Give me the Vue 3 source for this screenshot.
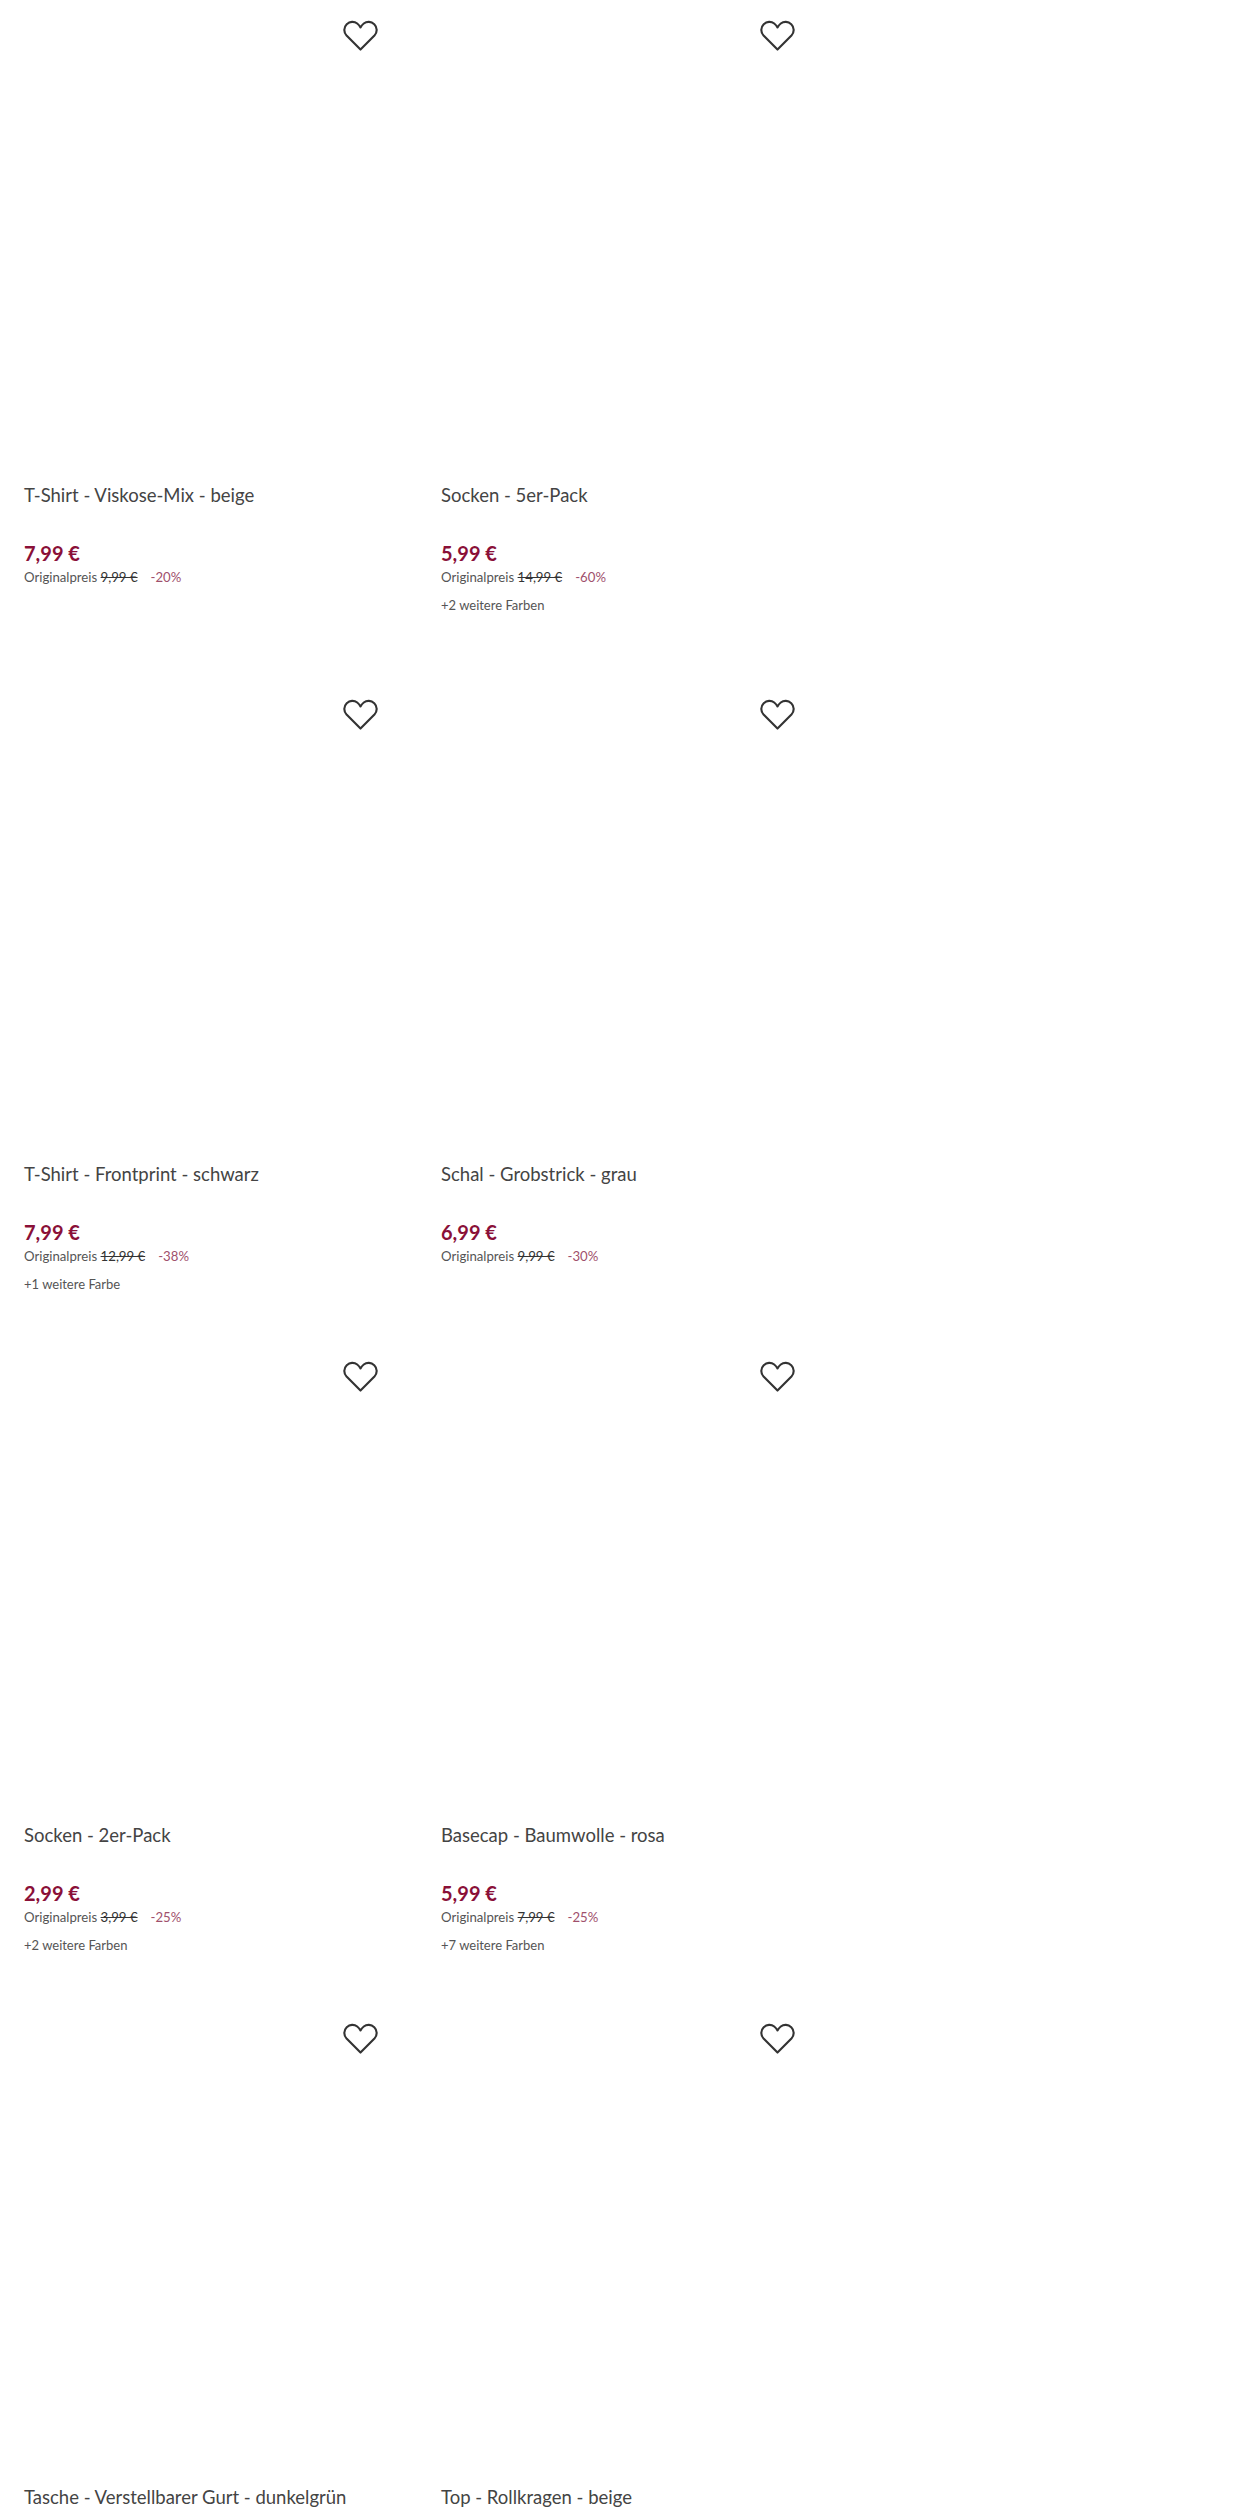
<script setup>
const rows = [
  {
    cls: 'row-first',
    items: [
      { title: 'T-Shirt - Viskose-Mix - beige', price: '7,99 €', old: '9,99 €', off: '-20%' },
      { title: 'Socken - 5er-Pack', price: '5,99 €', old: '14,99 €', off: '-60%', more: '+2 weitere Farben' }
    ]
  },
  {
    cls: '',
    items: [
      { title: 'T-Shirt - Frontprint - schwarz', price: '7,99 €', old: '12,99 €', off: '-38%', more: '+1 weitere Farbe' },
      { title: 'Schal - Grobstrick - grau', price: '6,99 €', old: '9,99 €', off: '-30%' }
    ]
  },
  {
    cls: 'row-tight',
    items: [
      { title: 'Socken - 2er-Pack', price: '2,99 €', old: '3,99 €', off: '-25%', more: '+2 weitere Farben' },
      { title: 'Basecap - Baumwolle - rosa', price: '5,99 €', old: '7,99 €', off: '-25%', more: '+7 weitere Farben' }
    ]
  },
  {
    cls: 'row-tight',
    items: [
      { title: 'Tasche - Verstellbarer Gurt - dunkelgrün' },
      { title: 'Top - Rollkragen - beige' }
    ]
  }
]
</script>

<template>
  <div class="page">
    <div class="row" :class="row.cls" v-for="(row, i) in rows" :key="i">
      <div class="card" v-for="item in row.items" :key="item.title">
        <div class="image">
          <svg class="heart" viewBox="0 0 36 32" width="35" height="31">
            <path d="M18 30.5 L3.6 16 C0.4 12.6 0.6 7.4 3.8 4.3 C7 1.2 11.6 1.2 14.6 3.6 C16 4.7 17.2 6.2 18 7.6 C18.8 6.2 20 4.7 21.4 3.6 C24.4 1.2 29 1.2 32.2 4.3 C35.4 7.4 35.6 12.6 32.4 16 Z" />
          </svg>
        </div>
        <div class="title">{{ item.title }}</div>
        <template v-if="item.price">
          <div class="price">{{ item.price }}</div>
          <div class="original">
            Originalpreis <s>{{ item.old }}</s><span class="off">{{ item.off }}</span>
          </div>
          <div class="more" v-if="item.more">{{ item.more }}</div>
        </template>
      </div>
    </div>
  </div>
</template>

<style scoped>
.page {
  width: 1250px;
  height: 2516px;
  overflow: hidden;
  background: #fff;
  font-family: "Lato", "Open Sans", sans-serif;
  color: #3a3a3a;
}

.row {
  display: grid;
  grid-template-columns: 417px 417px;
  padding-left: 24px;
  height: 662px;
}

.row-first {
  height: 679px;
}

.image {
  position: relative;
  height: 483px;
}

.row-tight .image {
  height: 482px;
}

.heart {
  position: absolute;
  top: 20px;
  left: 319px;
  fill: none;
  stroke: #333;
  stroke-width: 2.2;
  stroke-linejoin: round;
}

.title {
  font-size: 18.5px;
  line-height: 24px;
  height: 24px;
  color: #444;
}

.price {
  margin-top: 34px;
  font-size: 20px;
  line-height: 24px;
  font-weight: 700;
  color: #8a1038;
}

.original {
  font-size: 13.2px;
  line-height: 16px;
  margin-top: 4px;
  color: #555;
}

.original s {
  color: #333;
}

.off {
  margin-left: 13px;
  color: #a0506c;
}

.more {
  font-size: 13px;
  line-height: 16px;
  margin-top: 12px;
  color: #555;
}
</style>
